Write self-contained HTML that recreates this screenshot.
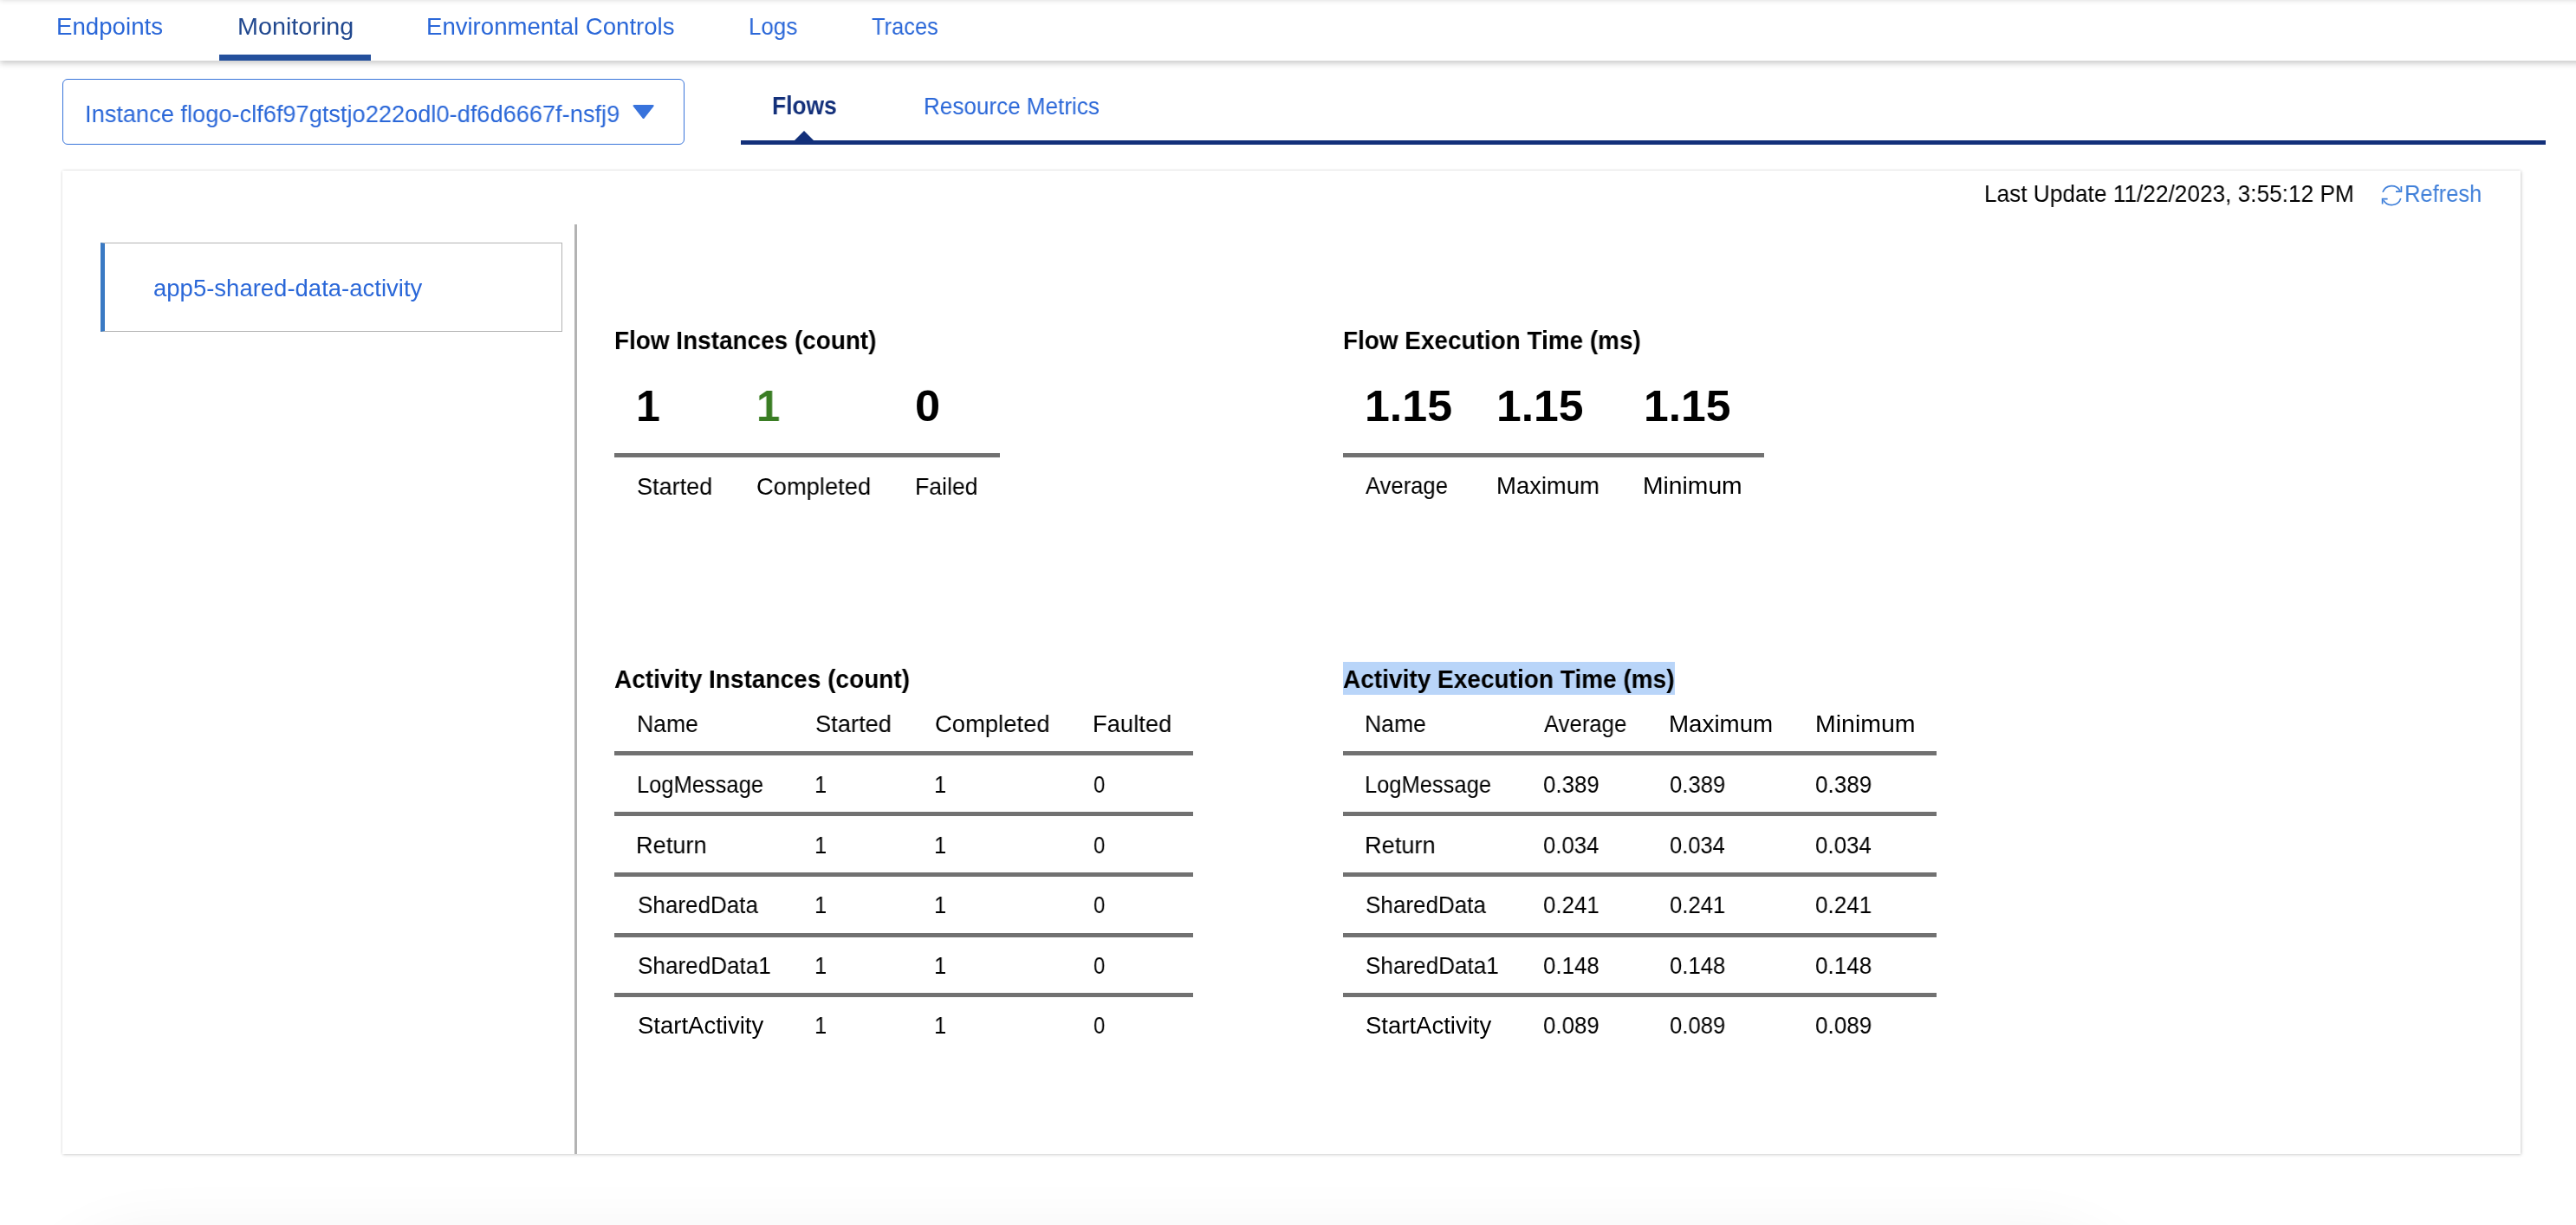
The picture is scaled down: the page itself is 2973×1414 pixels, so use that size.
<!DOCTYPE html>
<html lang="en">
<head>
<meta charset="utf-8">
<title>Monitoring - Flows</title>
<style>
html, body { margin: 0; padding: 0; }
body {
  width: 2973px; height: 1414px; overflow: hidden;
  background: #ffffff;
  font-family: "Liberation Sans", sans-serif;
  color: #000;
}
.page { position: relative; width: 2973px; height: 1414px; overflow: hidden; background: #fff; }
.abs { position: absolute; }
.t { position: absolute; white-space: nowrap; will-change: transform; line-height: normal; transform-origin: 0 0; font-family: "Liberation Sans", sans-serif; }
.nav { position: absolute; left: 0; top: 0; width: 3003px; height: 70px; background: #fff;
  box-shadow: 0 3px 7px rgba(0,0,0,0.22); }
.topshade { position: absolute; left: 0; top: -20px; width: 3003px; height: 20px; background: #fff;
  box-shadow: 0 0 6px rgba(0,0,0,0.16); z-index: 5; }
.navline { left: 253px; top: 63px; width: 175px; height: 7px; background: #24509c; }
.dropdown { left: 72px; top: 91px; width: 716px; height: 74px; border: 1.5px solid #3a75da; border-radius: 6px; }
.subline { left: 855px; top: 162px; width: 2083px; height: 5px; background: #13307a; }
.card { left: 72px; top: 197px; width: 2837px; height: 1135px; background: #fff;
  box-shadow: 0 0 3px rgba(0,0,0,0.12), 1px 1px 4px rgba(0,0,0,0.14); }
.item { left: 116px; top: 280px; width: 526.8px; height: 100.6px; border: 1.2px solid #b3b3b3; border-left: 5px solid #3a7ac4; }
.itembar { left: 116px; top: 280px; width: 5px; height: 103px; background: #3a7ac4; }
.divider { left: 663px; top: 259px; width: 2.8px; height: 1073px; background: #b3b3b3; }
.rule { height: 4.8px; background: #717171; }
.hl { left: 1550px; top: 764px; width: 383px; height: 38px; background: #b9d5f9; }
.bottomshade { left: 70px; top: 1445px; width: 2380px; height: 200px; border-radius: 100px;
  box-shadow: 0 0 80px 12px rgba(0,0,0,0.075); }
</style>
</head>
<body>
<div class="page">
<div class="nav"></div>
<div class="topshade"></div>
<div class="abs navline"></div>

<div class="abs dropdown"></div>
<svg class="abs" style="left:0;top:0" width="800" height="200" viewBox="0 0 800 200">
  <path d="M732.2 121 L753.2 121 Q755.6 121 754.2 123 L743.6 136.4 Q742.6 137.6 741.6 136.4 L731 123 Q729.6 121 732.2 121 Z" fill="#3873dc"/>
</svg>

<div class="abs subline"></div>
<svg class="abs" style="left:900px;top:140px" width="60" height="30" viewBox="900 140 60 30">
  <path d="M916.5 162.5 L928 151 L939.5 162.5 Z" fill="#13307a"/>
</svg>

<div class="abs card"></div>
<div class="abs bottomshade"></div>

<div class="abs item"></div>
<div class="abs divider"></div>

<div class="abs rule" style="left:709px;top:523px;width:445px;"></div>
<div class="abs rule" style="left:1550px;top:523px;width:486px;"></div>

<div class="abs rule" style="left:709px;top:867px;width:668px;"></div>
<div class="abs rule" style="left:709px;top:936.9px;width:668px;"></div>
<div class="abs rule" style="left:709px;top:1006.8px;width:668px;"></div>
<div class="abs rule" style="left:709px;top:1076.8px;width:668px;"></div>
<div class="abs rule" style="left:709px;top:1146.4px;width:668px;"></div>

<div class="abs rule" style="left:1550px;top:867px;width:685px;"></div>
<div class="abs rule" style="left:1550px;top:936.9px;width:685px;"></div>
<div class="abs rule" style="left:1550px;top:1006.8px;width:685px;"></div>
<div class="abs rule" style="left:1550px;top:1076.8px;width:685px;"></div>
<div class="abs rule" style="left:1550px;top:1146.4px;width:685px;"></div>

<div class="abs hl"></div>

<svg class="abs" style="left:2740px;top:205px" width="40" height="40" viewBox="2740 205 40 40">
  <g fill="none" stroke="#3f7fd9" stroke-width="1.7">
    <path d="M2749.96 221.79 A 11 11 0 0 1 2769.83 220.05"/>
    <path d="M2765 221.2 L2771.4 221.2 L2771.4 215"/>
    <path d="M2770.76 228.95 A 11 11 0 0 1 2750.77 231.05"/>
    <path d="M2755.6 229.6 L2749.6 229.6 L2749.6 235.6"/>
  </g>
</svg>

<span class="t" style="left:64.84px;top:15.00px;font-size:27.5px;color:#2a67d8;transform:scaleX(1.0058);">Endpoints</span>
<span class="t" style="left:273.55px;top:15.00px;font-size:27.5px;color:#21488f;transform:scaleX(1.0457);">Monitoring</span>
<span class="t" style="left:491.55px;top:15.00px;font-size:27.5px;color:#2a67d8;transform:scaleX(1.0024);">Environmental Controls</span>
<span class="t" style="left:863.77px;top:15.00px;font-size:27.5px;color:#2a67d8;transform:scaleX(0.9431);">Logs</span>
<span class="t" style="left:1006.20px;top:15.00px;font-size:27.5px;color:#2a67d8;transform:scaleX(0.9249);">Traces</span>
<span class="t" style="left:97.87px;top:116.00px;font-size:27.5px;color:#2a67d8;transform:scaleX(0.9895);">Instance flogo-clf6f97gtstjo222odl0-df6d6667f-nsfj9</span>
<span class="t" style="left:890.75px;top:105.90px;font-size:29px;font-weight:700;color:#13307a;transform:scaleX(0.9093);">Flows</span>
<span class="t" style="left:1065.96px;top:106.90px;font-size:27.5px;color:#2a67d8;transform:scaleX(0.9482);">Resource Metrics</span>
<span class="t" style="left:2289.95px;top:208.00px;font-size:27.5px;transform:scaleX(0.9539);">Last Update 11/22/2023, 3:55:12 PM</span>
<span class="t" style="left:2775.11px;top:207.80px;font-size:27.5px;color:#3f7fd9;transform:scaleX(0.9266);">Refresh</span>
<span class="t" style="left:177.14px;top:317.10px;font-size:27.5px;color:#2a67d8;">app5-shared-data-activity</span>
<span class="t" style="left:708.86px;top:376.90px;font-size:29px;font-weight:700;transform:scaleX(0.9627);">Flow Instances (count)</span>
<span class="t" style="left:733.87px;top:439.40px;font-size:50.4px;font-weight:700;transform:scaleX(0.9947);">1</span>
<span class="t" style="left:872.63px;top:439.40px;font-size:50.4px;font-weight:700;color:#3a7d24;transform:scaleX(0.9735);">1</span>
<span class="t" style="left:1055.76px;top:439.40px;font-size:50.4px;font-weight:700;transform:scaleX(1.0405);">0</span>
<span class="t" style="left:735.15px;top:545.50px;font-size:27.5px;transform:scaleX(0.9842);">Started</span>
<span class="t" style="left:872.92px;top:545.50px;font-size:27.5px;transform:scaleX(0.9934);">Completed</span>
<span class="t" style="left:1055.92px;top:545.50px;font-size:27.5px;transform:scaleX(0.9690);">Failed</span>
<span class="t" style="left:1549.56px;top:377.10px;font-size:29px;font-weight:700;transform:scaleX(0.9624);">Flow Execution Time (ms)</span>
<span class="t" style="left:1575.46px;top:439.40px;font-size:50.4px;font-weight:700;transform:scaleX(1.0300);">1.15</span>
<span class="t" style="left:1727.47px;top:439.40px;font-size:50.4px;font-weight:700;transform:scaleX(1.0257);">1.15</span>
<span class="t" style="left:1896.57px;top:439.40px;font-size:50.4px;font-weight:700;transform:scaleX(1.0247);">1.15</span>
<span class="t" style="left:1575.90px;top:545.40px;font-size:27.5px;transform:scaleX(0.9314);">Average</span>
<span class="t" style="left:1727.06px;top:545.40px;font-size:27.5px;transform:scaleX(0.9974);">Maximum</span>
<span class="t" style="left:1896.09px;top:545.40px;font-size:27.5px;transform:scaleX(1.0282);">Minimum</span>
<span class="t" style="left:709.16px;top:768.10px;font-size:29px;font-weight:700;transform:scaleX(0.9664);">Activity Instances (count)</span>
<span class="t" style="left:1550.06px;top:768.00px;font-size:29px;font-weight:700;transform:scaleX(0.9663);">Activity Execution Time (ms)</span>
<span class="t" style="left:734.92px;top:820.00px;font-size:27.5px;transform:scaleX(0.9659);">Name</span>
<span class="t" style="left:940.55px;top:820.00px;font-size:27.5px;transform:scaleX(0.9924);">Started</span>
<span class="t" style="left:1078.62px;top:820.00px;font-size:27.5px;transform:scaleX(0.9965);">Completed</span>
<span class="t" style="left:1260.66px;top:820.00px;font-size:27.5px;transform:scaleX(0.9940);">Faulted</span>
<span class="t" style="left:1575.42px;top:820.00px;font-size:27.5px;transform:scaleX(0.9659);">Name</span>
<span class="t" style="left:1781.50px;top:820.00px;font-size:27.5px;transform:scaleX(0.9344);">Average</span>
<span class="t" style="left:1925.53px;top:820.00px;font-size:27.5px;transform:scaleX(1.0087);">Maximum</span>
<span class="t" style="left:2094.58px;top:820.00px;font-size:27.5px;transform:scaleX(1.0356);">Minimum</span>
<span class="t" style="left:734.51px;top:890.00px;font-size:27.5px;transform:scaleX(0.9267);">LogMessage</span>
<span class="t" style="left:939.80px;top:890.00px;font-size:27.5px;transform:scaleX(0.9309);">1</span>
<span class="t" style="left:1078.40px;top:890.00px;font-size:27.5px;transform:scaleX(0.9309);">1</span>
<span class="t" style="left:1262.05px;top:890.00px;font-size:27.5px;transform:scaleX(0.8727);">0</span>
<span class="t" style="left:1575.01px;top:890.00px;font-size:27.5px;transform:scaleX(0.9267);">LogMessage</span>
<span class="t" style="left:1780.69px;top:890.00px;font-size:27.5px;transform:scaleX(0.9410);">0.389</span>
<span class="t" style="left:1926.60px;top:890.00px;font-size:27.5px;transform:scaleX(0.9335);">0.389</span>
<span class="t" style="left:2095.18px;top:890.00px;font-size:27.5px;transform:scaleX(0.9485);">0.389</span>
<span class="t" style="left:734.37px;top:959.60px;font-size:27.5px;transform:scaleX(0.9892);">Return</span>
<span class="t" style="left:939.80px;top:959.60px;font-size:27.5px;transform:scaleX(0.9309);">1</span>
<span class="t" style="left:1078.40px;top:959.60px;font-size:27.5px;transform:scaleX(0.9309);">1</span>
<span class="t" style="left:1262.05px;top:959.60px;font-size:27.5px;transform:scaleX(0.8727);">0</span>
<span class="t" style="left:1574.87px;top:959.60px;font-size:27.5px;transform:scaleX(0.9892);">Return</span>
<span class="t" style="left:1780.70px;top:959.60px;font-size:27.5px;transform:scaleX(0.9350);">0.034</span>
<span class="t" style="left:1926.60px;top:959.60px;font-size:27.5px;transform:scaleX(0.9276);">0.034</span>
<span class="t" style="left:2095.19px;top:959.60px;font-size:27.5px;transform:scaleX(0.9424);">0.034</span>
<span class="t" style="left:735.69px;top:1029.20px;font-size:27.5px;transform:scaleX(0.9467);">SharedData</span>
<span class="t" style="left:939.80px;top:1029.20px;font-size:27.5px;transform:scaleX(0.9309);">1</span>
<span class="t" style="left:1078.40px;top:1029.20px;font-size:27.5px;transform:scaleX(0.9309);">1</span>
<span class="t" style="left:1262.05px;top:1029.20px;font-size:27.5px;transform:scaleX(0.8727);">0</span>
<span class="t" style="left:1576.19px;top:1029.20px;font-size:27.5px;transform:scaleX(0.9467);">SharedData</span>
<span class="t" style="left:1780.69px;top:1029.20px;font-size:27.5px;transform:scaleX(0.9410);">0.241</span>
<span class="t" style="left:1926.60px;top:1029.20px;font-size:27.5px;transform:scaleX(0.9335);">0.241</span>
<span class="t" style="left:2095.18px;top:1029.20px;font-size:27.5px;transform:scaleX(0.9485);">0.241</span>
<span class="t" style="left:735.68px;top:1098.80px;font-size:27.5px;transform:scaleX(0.9489);">SharedData1</span>
<span class="t" style="left:939.80px;top:1098.80px;font-size:27.5px;transform:scaleX(0.9309);">1</span>
<span class="t" style="left:1078.40px;top:1098.80px;font-size:27.5px;transform:scaleX(0.9309);">1</span>
<span class="t" style="left:1262.05px;top:1098.80px;font-size:27.5px;transform:scaleX(0.8727);">0</span>
<span class="t" style="left:1576.18px;top:1098.80px;font-size:27.5px;transform:scaleX(0.9489);">SharedData1</span>
<span class="t" style="left:1780.69px;top:1098.80px;font-size:27.5px;transform:scaleX(0.9410);">0.148</span>
<span class="t" style="left:1926.60px;top:1098.80px;font-size:27.5px;transform:scaleX(0.9335);">0.148</span>
<span class="t" style="left:2095.18px;top:1098.80px;font-size:27.5px;transform:scaleX(0.9485);">0.148</span>
<span class="t" style="left:735.64px;top:1168.40px;font-size:27.5px;">StartActivity</span>
<span class="t" style="left:939.80px;top:1168.40px;font-size:27.5px;transform:scaleX(0.9309);">1</span>
<span class="t" style="left:1078.40px;top:1168.40px;font-size:27.5px;transform:scaleX(0.9309);">1</span>
<span class="t" style="left:1262.05px;top:1168.40px;font-size:27.5px;transform:scaleX(0.8727);">0</span>
<span class="t" style="left:1576.14px;top:1168.40px;font-size:27.5px;">StartActivity</span>
<span class="t" style="left:1780.69px;top:1168.40px;font-size:27.5px;transform:scaleX(0.9410);">0.089</span>
<span class="t" style="left:1926.60px;top:1168.40px;font-size:27.5px;transform:scaleX(0.9335);">0.089</span>
<span class="t" style="left:2095.18px;top:1168.40px;font-size:27.5px;transform:scaleX(0.9485);">0.089</span>
</div>
</body>
</html>
